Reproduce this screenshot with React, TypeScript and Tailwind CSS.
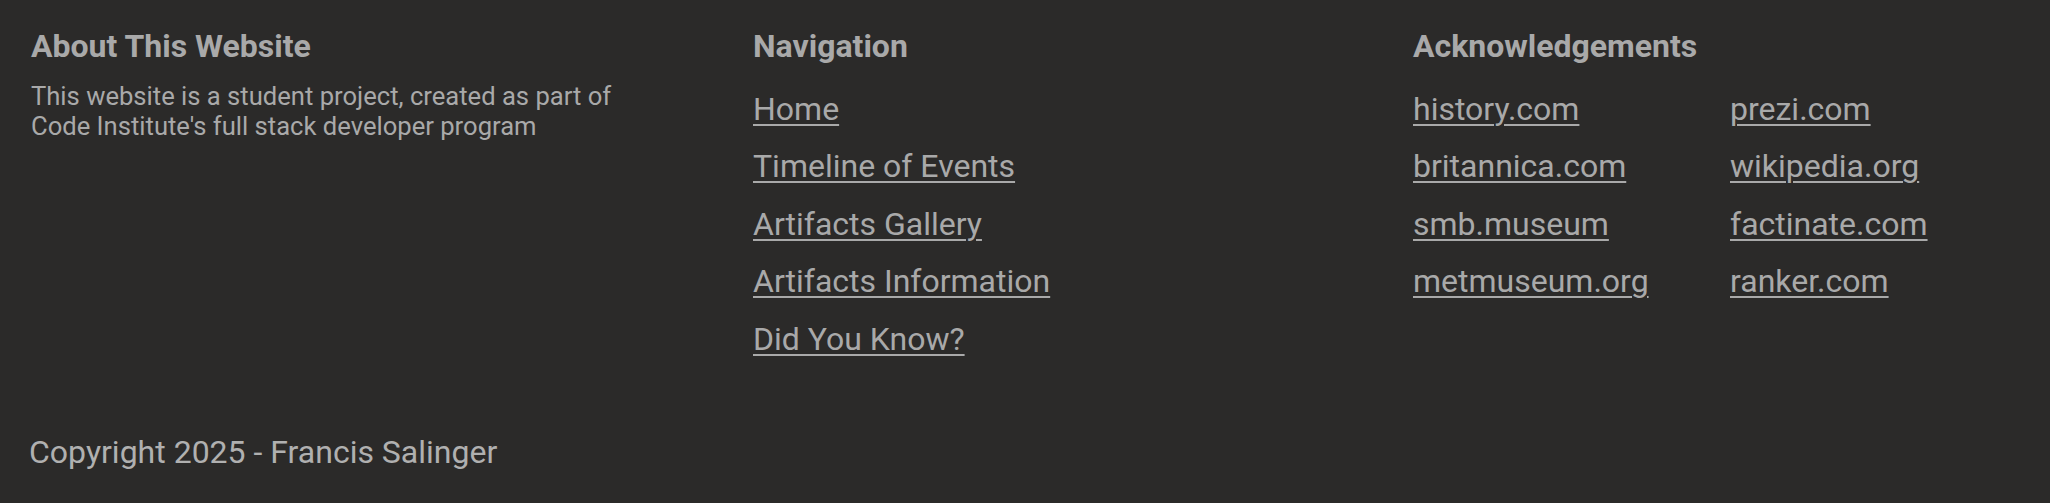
const navLinks = [
  "Home",
  "Timeline of Events",
  "Artifacts Gallery",
  "Artifacts Information",
  "Did You Know?",
];

const sources = [
  "history.com",
  "prezi.com",
  "britannica.com",
  "wikipedia.org",
  "smb.museum",
  "factinate.com",
  "metmuseum.org",
  "ranker.com",
];

function FooterLink({ label }: { label: string }) {
  return (
    <a
      href="#"
      className="block text-[32px] leading-[57.5px] text-[#a9a9a9] underline decoration-[2px] underline-offset-[4px]"
    >
      {label}
    </a>
  );
}

export default function App() {
  return (
    <footer
      className="min-h-[503px] bg-[#2b2a29] text-[#a9a9a9] pt-[26.5px] pb-[30px]"
      style={{ fontFamily: "Roboto, 'Liberation Sans', sans-serif" }}
    >
      <div className="grid grid-cols-[722px_660px_1fr] pl-[31px]">
        <section>
          <h2 className="text-[32px] leading-[38.4px] font-bold">About This Website</h2>
          <p className="mt-[16px] text-[25.6px] leading-[30px] w-[640px]">
            This website is a student project, created as part of
            <br />
            Code Institute's full stack developer program
          </p>
        </section>
        <section>
          <h2 className="text-[32px] leading-[38.4px] font-bold">Navigation</h2>
          <nav className="mt-[16px]">
            {navLinks.map((l) => (
              <FooterLink key={l} label={l} />
            ))}
          </nav>
        </section>
        <section>
          <h2 className="text-[32px] leading-[38.4px] font-bold">Acknowledgements</h2>
          <div className="mt-[16px] grid grid-cols-[317px_1fr]">
            {sources.map((s) => (
              <div key={s}>
                <FooterLink label={s} />
              </div>
            ))}
          </div>
        </section>
      </div>
      <p className="mt-[64.5px] pl-[29px] text-[32px] leading-[38.4px] text-[#b0b0b0]">
        Copyright 2025 - Francis Salinger
      </p>
    </footer>
  );
}
